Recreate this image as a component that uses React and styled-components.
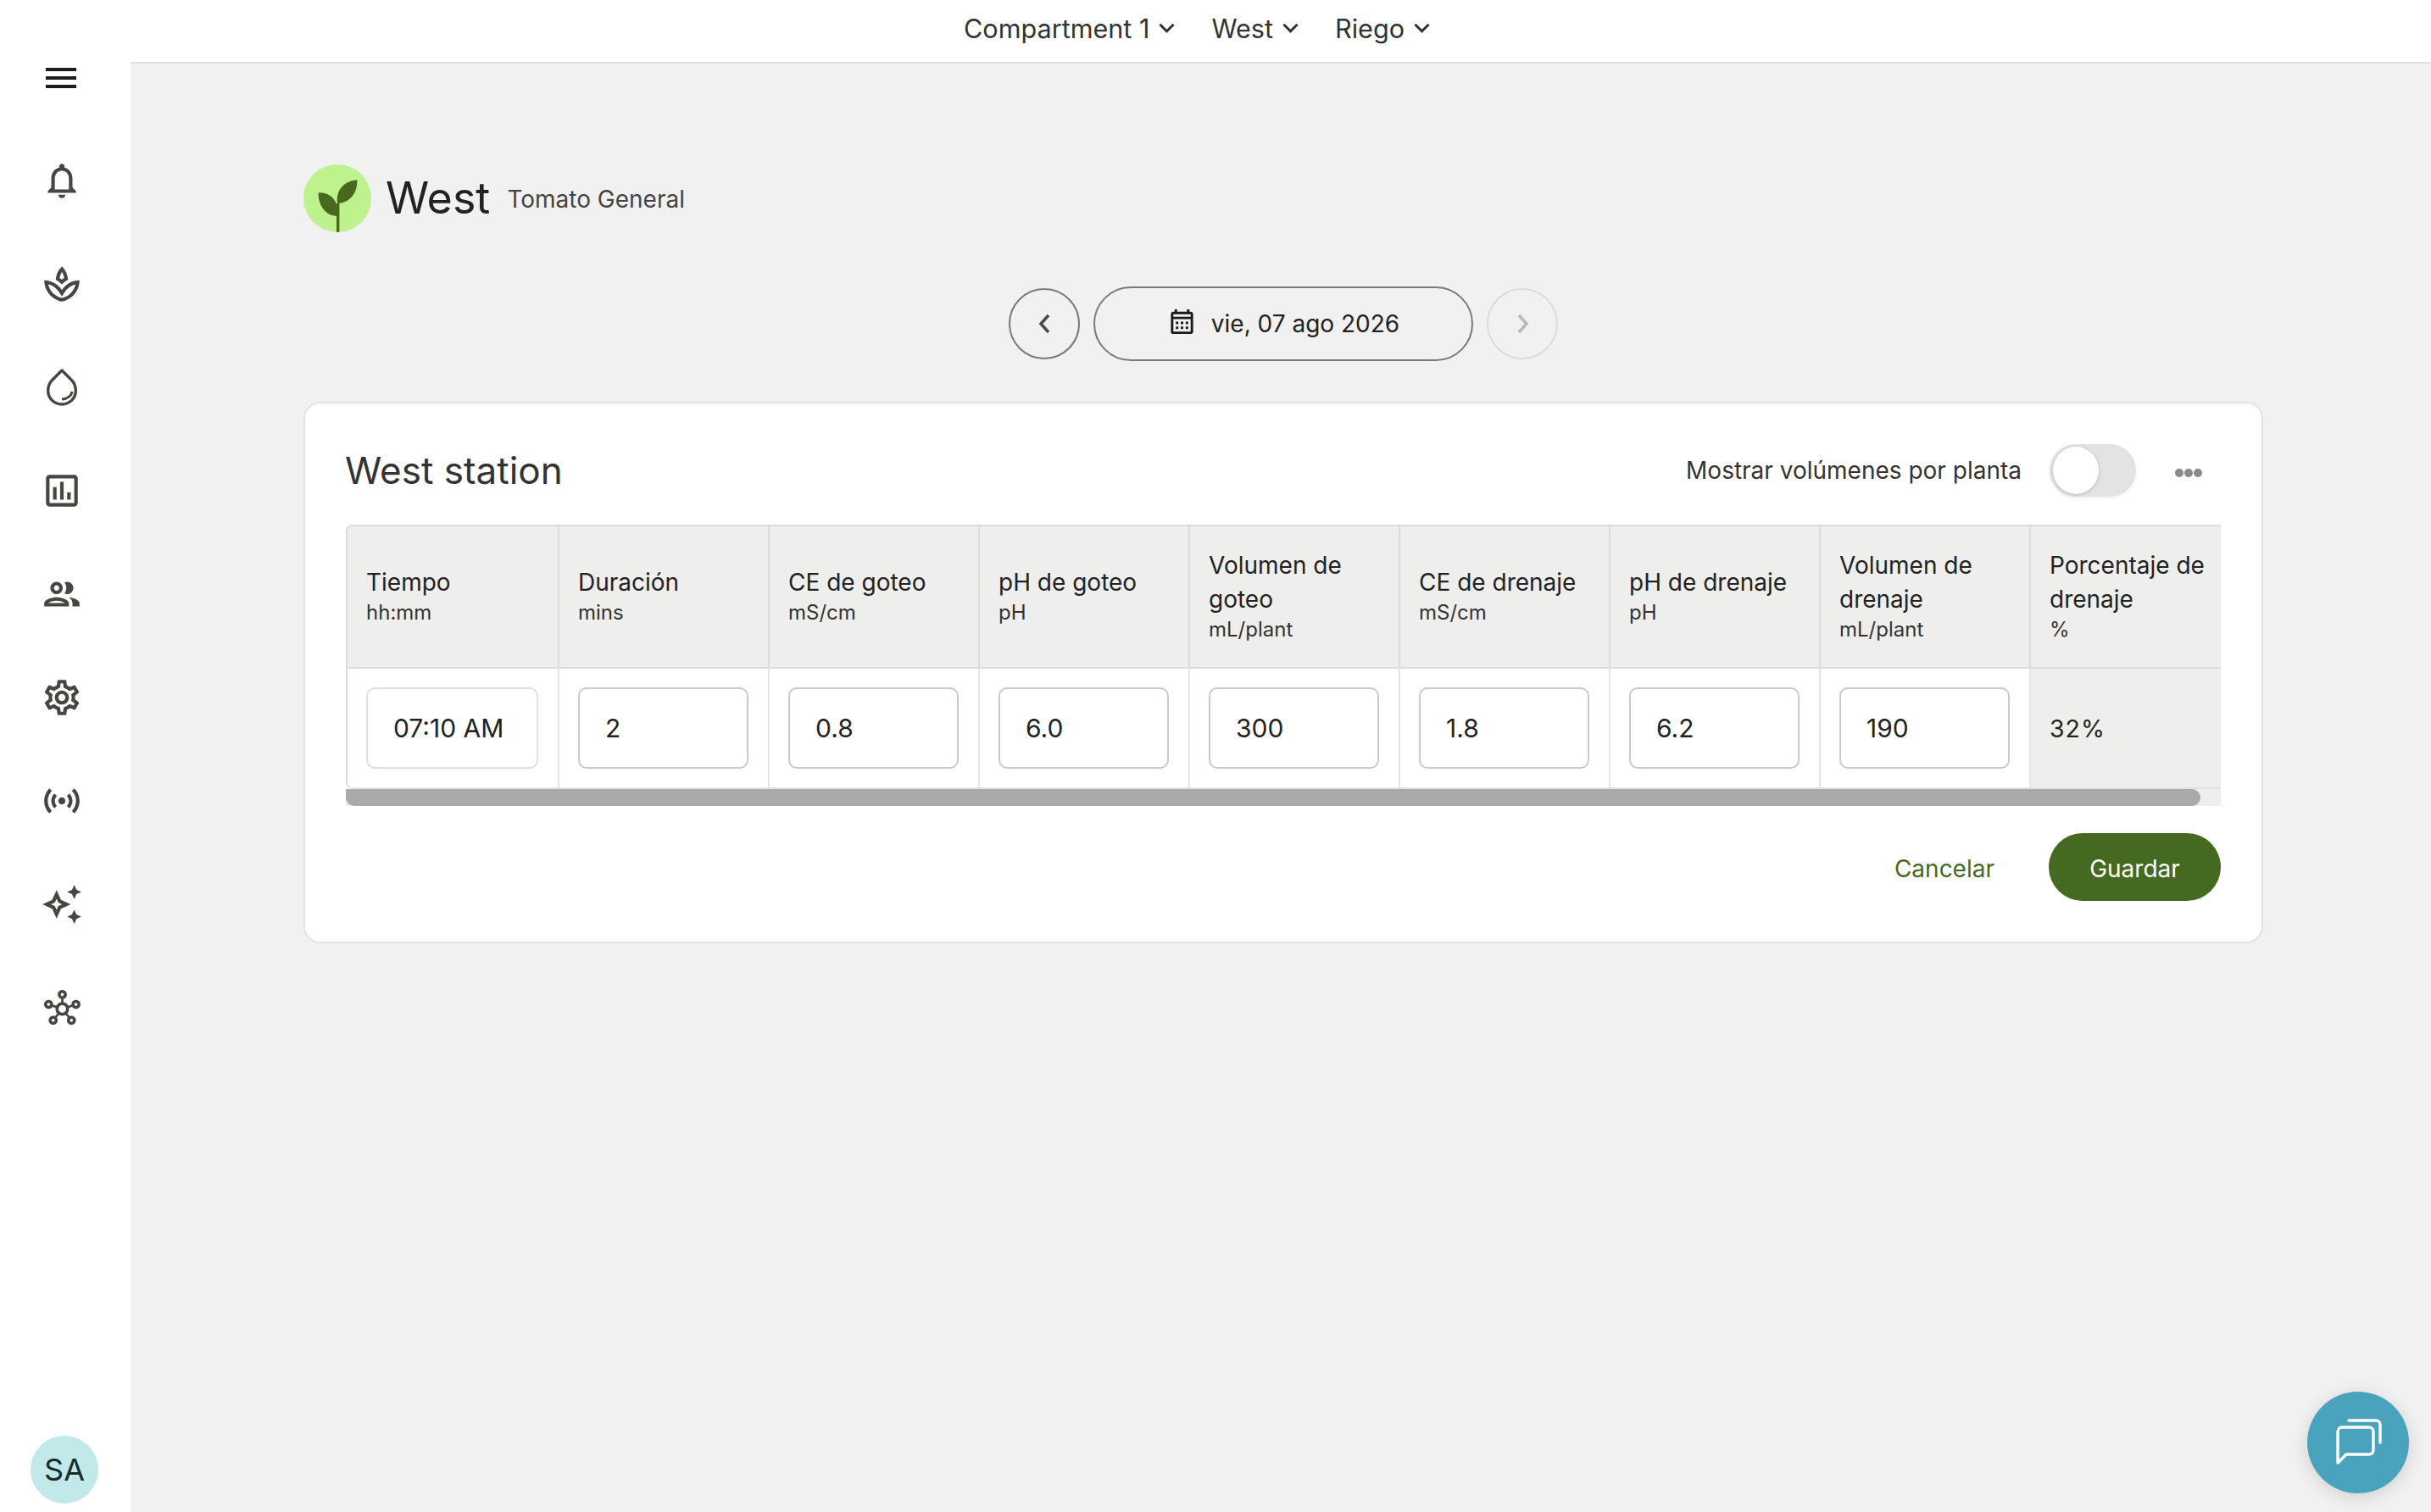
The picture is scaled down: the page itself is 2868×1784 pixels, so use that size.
import React from "react";
import styled, { createGlobalStyle } from "styled-components";
import {
  MdOutlineNotifications,
  MdOutlineSpa,
  MdOutlineAssessment,
  MdOutlinePeople,
  MdOutlineSettings,
  MdOutlineSensors,
  MdOutlineAutoAwesome,
  MdOutlineHub,
  MdOutlineCalendarMonth,
} from "react-icons/md";

const Global = createGlobalStyle`
  html, body { margin: 0; padding: 0; background: #f1f1f1; }
  body { font-family: Inter, "Noto Sans", sans-serif; color: #222; -webkit-font-smoothing: antialiased; }
  * { box-sizing: border-box; }
`;

const Page = styled.div`
  display: flex;
  width: 2868px;
  height: 1784px;
  overflow: hidden;
  position: relative;
  background: #f1f1f1;
`;

const Sidebar = styled.aside`
  flex: 0 0 154px;
  height: 100%;
  background: #fff;
  display: flex;
  flex-direction: column;
`;

const MenuButton = styled.div`
  width: 36px;
  height: 24px;
  margin: 80px 0 48px 54px;
  display: flex;
  flex-direction: column;
  justify-content: space-between;
`;

const MenuLine = styled.span`
  display: block;
  height: 4px;
  background: #1d1f1a;
`;

const NavItem = styled.div`
  width: 146px;
  height: 122px;
  display: flex;
  align-items: center;
  justify-content: center;
  color: #434840;
  font-size: ${(p) => p.$size || 50}px;
`;

const Avatar = styled.div`
  width: 80px;
  height: 80px;
  margin: auto 0 10px 36px;
  border-radius: 50%;
  background: #c2e9ea;
  color: #1b2b2b;
  font-size: 36px;
  display: flex;
  align-items: center;
  justify-content: center;
`;

const Column = styled.div`
  flex: 1;
  min-width: 0;
  display: flex;
  flex-direction: column;
`;

const TopBar = styled.header`
  height: 75px;
  flex: none;
  background: #fff;
  border-bottom: 2px solid #dedede;
  display: flex;
  align-items: center;
  justify-content: center;
  gap: 43px;
  padding: 0 198px 7px 0;
`;

const Crumb = styled.div`
  display: flex;
  align-items: center;
  gap: 11px;
  font-size: 30.6px;
  color: #333;
`;

const Main = styled.main`
  flex: 1;
  padding: 119px 198px 0 204px;
  display: flex;
  flex-direction: column;
`;

const Heading = styled.div`
  display: flex;
  align-items: center;
  height: 80px;
`;

const LogoBadge = styled.svg`
  width: 80px;
  height: 80px;
  flex: none;
  margin-right: 17px;
`;

const HeadingTitle = styled.h1`
  margin: -2px 20px 0 0;
  font-size: 52px;
  font-weight: 400;
  color: #222;
`;

const HeadingSub = styled.span`
  font-size: 28px;
  color: #444;
  margin-top: 1px;
`;

const DateRow = styled.div`
  display: flex;
  align-items: center;
  justify-content: center;
  gap: 16px;
  margin-top: 64px;
`;

const RoundButton = styled.div`
  width: 84px;
  height: 84px;
  border-radius: 50%;
  border: 2px solid ${(p) => (p.$disabled ? "#dcdcdc" : "#7a7a72")};
  color: ${(p) => (p.$disabled ? "#b8b8b8" : "#4a4d46")};
  display: flex;
  align-items: center;
  justify-content: center;
`;

const DatePill = styled.div`
  width: 448px;
  height: 88px;
  border-radius: 44px;
  border: 2px solid #7a7a72;
  display: flex;
  align-items: center;
  justify-content: center;
  gap: 17px;
  font-size: 28px;
  color: #222;
  svg { font-size: 35px; color: #1a1a1a; margin-top: -6px; }
`;

const Card = styled.section`
  margin-top: 48px;
  height: 639px;
  background: #fff;
  border: 2px solid #e3e5dc;
  border-radius: 20px;
  padding: 48px 48px 47px 47px;
`;

const CardHeader = styled.div`
  height: 62px;
  margin-bottom: 33px;
  display: flex;
  align-items: center;
`;

const CardTitle = styled.h2`
  margin: 0 auto 0 0;
  font-size: 44px;
  font-weight: 400;
  color: #333;
`;

const ToggleLabel = styled.span`
  font-size: 28px;
  color: #333;
  margin-right: 33px;
`;

const Toggle = styled.div`
  width: 102px;
  height: 62px;
  border-radius: 31px;
  background: #e3e3e3;
  padding: 3px 4px;
  box-shadow: 0 2px 4px rgba(0, 0, 0, 0.06);
`;

const ToggleKnob = styled.div`
  width: 54px;
  height: 56px;
  border-radius: 50%;
  background: #fff;
  box-shadow: 0 1px 4px rgba(0, 0, 0, 0.18);
`;

const MoreDots = styled.div`
  display: flex;
  gap: 1px;
  margin: 6px 22px 0 46px;
`;

const Dot = styled.span`
  width: 10px;
  height: 10px;
  border-radius: 50%;
  background: #8a8a8a;
`;

const TableClip = styled.div`
  overflow: hidden;
  margin-left: 1px;
  border-top: 2px solid #dcdcdc;
  border-bottom: 2px solid #e2e2e2;
  border-left: 2px solid #dcdcdc;
  border-radius: 8px 0 0 8px;
`;

const TableGrid = styled.div`
  display: grid;
  width: 2235px;
  grid-template-columns: 250px repeat(7, 248px) 249px;
  grid-template-rows: 168px 140px;
`;

const HeadCell = styled.div`
  background: #eeeeed;
  border-right: 2px solid #dcdcdc;
  border-bottom: 2px solid #dcdcdc;
  padding: 0 22px 2px;
  display: flex;
  flex-direction: column;
  justify-content: center;
`;

const HeadLabel = styled.div`
  font-size: 28px;
  line-height: 40px;
  color: #222;
`;

const HeadUnit = styled.div`
  font-size: 24px;
  line-height: 32px;
  color: #333;
`;

const BodyCell = styled.div`
  background: ${(p) => (p.$shaded ? "#eeeeed" : "#fff")};
  border-right: 2px solid #e6e6e6;
  padding: 0 23px 0 22px;
  display: flex;
  align-items: center;
  font-size: 28.5px;
  color: #222;
  letter-spacing: ${(p) => (p.$shaded ? "1px" : "0")};
`;

const ValueField = styled.div`
  width: 100%;
  height: 96px;
  border: 2px solid ${(p) => (p.$light ? "#e0e0e0" : "#c9c9c9")};
  border-radius: 10px;
  background: #fff;
  padding-left: 30px;
  display: flex;
  align-items: center;
  font-size: 30px;
  color: #222;
`;

const ScrollTrack = styled.div`
  height: 20px;
  margin-left: 1px;
  background: #eeeeee;
`;

const ScrollThumb = styled.div`
  width: 2188px;
  height: 20px;
  border-radius: 0 10px 10px 10px;
  background: #aaaaaa;
`;

const Actions = styled.div`
  margin-top: 32px;
  display: flex;
  align-items: center;
  justify-content: flex-end;
`;

const CancelButton = styled.div`
  font-size: 28px;
  color: #466921;
  margin-right: 64px;
  padding-top: 4px;
`;

const SaveButton = styled.div`
  width: 203px;
  height: 80px;
  border-radius: 40px;
  background: #466921;
  color: #fff;
  font-size: 28px;
  padding-top: 4px;
  display: flex;
  align-items: center;
  justify-content: center;
`;

const ChatFab = styled.div`
  position: absolute;
  left: 2722px;
  top: 1642px;
  width: 120px;
  height: 120px;
  border-radius: 50%;
  background: #4aa3bc;
  box-shadow: 0 4px 20px rgba(0, 0, 0, 0.14);
  display: flex;
  align-items: center;
  justify-content: center;
`;

const Chevron = ({ dir = "down" }) => {
  if (dir === "down")
    return (
      <svg width="19" height="14" viewBox="0 0 20 14" fill="none">
        <path d="M1.5 2.5L10 11l8.5-8.5" stroke="#333" strokeWidth="3.2" />
      </svg>
    );
  const d = dir === "left" ? "M12 2L3 12l9 10" : "M3 2l9 10-9 10";
  return (
    <svg width="15" height="24" viewBox="0 0 15 24" fill="none">
      <path d={d} stroke="currentColor" strokeWidth="3.5" />
    </svg>
  );
};

const DropIcon = () => (
  <svg width="50" height="50" viewBox="0 0 50 50" fill="none" stroke="currentColor">
    <path
      strokeWidth="3.4"
      strokeLinejoin="round"
      d="M25 5L13.5 16.5C10.5 19.6 8.7 24 8.7 29C8.7 38 16 45 25 45C34 45 41.3 38 41.3 29C41.3 24 39.5 19.6 36.5 16.5Z"
    />
    <path strokeWidth="3" d="M25 39C31 39 36.5 35 37 30" />
  </svg>
);

const navItems = [
  { Icon: MdOutlineNotifications },
  { Icon: MdOutlineSpa },
  { Icon: DropIcon },
  { Icon: MdOutlineAssessment },
  { Icon: MdOutlinePeople },
  { Icon: MdOutlineSettings },
  { Icon: MdOutlineSensors },
  { Icon: MdOutlineAutoAwesome },
  { Icon: MdOutlineHub, size: 43 },
];

const columns = [
  { label: ["Tiempo"], unit: "hh:mm", value: "07:10 AM" },
  { label: ["Duración"], unit: "mins", value: "2" },
  { label: ["CE de goteo"], unit: "mS/cm", value: "0.8" },
  { label: ["pH de goteo"], unit: "pH", value: "6.0" },
  { label: ["Volumen de", "goteo"], unit: "mL/plant", value: "300" },
  { label: ["CE de drenaje"], unit: "mS/cm", value: "1.8" },
  { label: ["pH de drenaje"], unit: "pH", value: "6.2" },
  { label: ["Volumen de", "drenaje"], unit: "mL/plant", value: "190" },
  { label: ["Porcentaje de", "drenaje"], unit: "%", value: "32%", computed: true },
];

export default function App() {
  return (
    <Page>
      <Global />
      <Sidebar>
        <MenuButton>
          <MenuLine />
          <MenuLine />
          <MenuLine />
        </MenuButton>
        {navItems.map(({ Icon, size }, i) => (
          <NavItem key={i} $size={size}>
            <Icon />
          </NavItem>
        ))}
        <Avatar>SA</Avatar>
      </Sidebar>
      <Column>
        <TopBar>
          <Crumb>
            Compartment 1 <Chevron />
          </Crumb>
          <Crumb>
            West <Chevron />
          </Crumb>
          <Crumb>
            Riego <Chevron />
          </Crumb>
        </TopBar>
        <Main>
          <Heading>
            <LogoBadge viewBox="0 0 80 80">
              <defs>
                <clipPath id="badge">
                  <circle cx="40" cy="40" r="40" />
                </clipPath>
              </defs>
              <circle cx="40" cy="40" r="40" fill="#bdf28c" />
              <g fill="#46691f" clipPath="url(#badge)">
                <path d="M40 46C38 32 46 20 63.3 18.3C64 34 54 46 40 46Z" />
                <path d="M17.7 33.3C28 33 37 38 40 50L40 61C26 61 17 48 17.7 33.3Z" />
                <rect x="39" y="46" width="3.4" height="34" />
              </g>
            </LogoBadge>
            <HeadingTitle>West</HeadingTitle>
            <HeadingSub>Tomato General</HeadingSub>
          </Heading>
          <DateRow>
            <RoundButton>
              <Chevron dir="left" />
            </RoundButton>
            <DatePill>
              <MdOutlineCalendarMonth />
              vie, 07 ago 2026
            </DatePill>
            <RoundButton $disabled>
              <Chevron dir="right" />
            </RoundButton>
          </DateRow>
          <Card>
            <CardHeader>
              <CardTitle>West station</CardTitle>
              <ToggleLabel>Mostrar volúmenes por planta</ToggleLabel>
              <Toggle>
                <ToggleKnob />
              </Toggle>
              <MoreDots>
                <Dot />
                <Dot />
                <Dot />
              </MoreDots>
            </CardHeader>
            <TableClip>
              <TableGrid>
                {columns.map((c, i) => (
                  <HeadCell key={i}>
                    {c.label.map((l) => (
                      <HeadLabel key={l}>{l}</HeadLabel>
                    ))}
                    <HeadUnit>{c.unit}</HeadUnit>
                  </HeadCell>
                ))}
                {columns.map((c, i) =>
                  c.computed ? (
                    <BodyCell key={i} $shaded>
                      {c.value}
                    </BodyCell>
                  ) : (
                    <BodyCell key={i}>
                      <ValueField $light={i === 0}>{c.value}</ValueField>
                    </BodyCell>
                  )
                )}
              </TableGrid>
            </TableClip>
            <ScrollTrack>
              <ScrollThumb />
            </ScrollTrack>
            <Actions>
              <CancelButton>Cancelar</CancelButton>
              <SaveButton>Guardar</SaveButton>
            </Actions>
          </Card>
        </Main>
      </Column>
      <ChatFab>
        <svg width="60" height="60" viewBox="0 0 60 60" fill="none" stroke="#fff" strokeWidth="3.4" strokeLinecap="round" strokeLinejoin="round">
          <path d="M6 54V17a5 5 0 0 1 5-5H43a5 5 0 0 1 5 5V39a5 5 0 0 1-5 5H16Z" />
          <path d="M19 4H51a5 5 0 0 1 5 5V30" />
        </svg>
      </ChatFab>
    </Page>
  );
}
